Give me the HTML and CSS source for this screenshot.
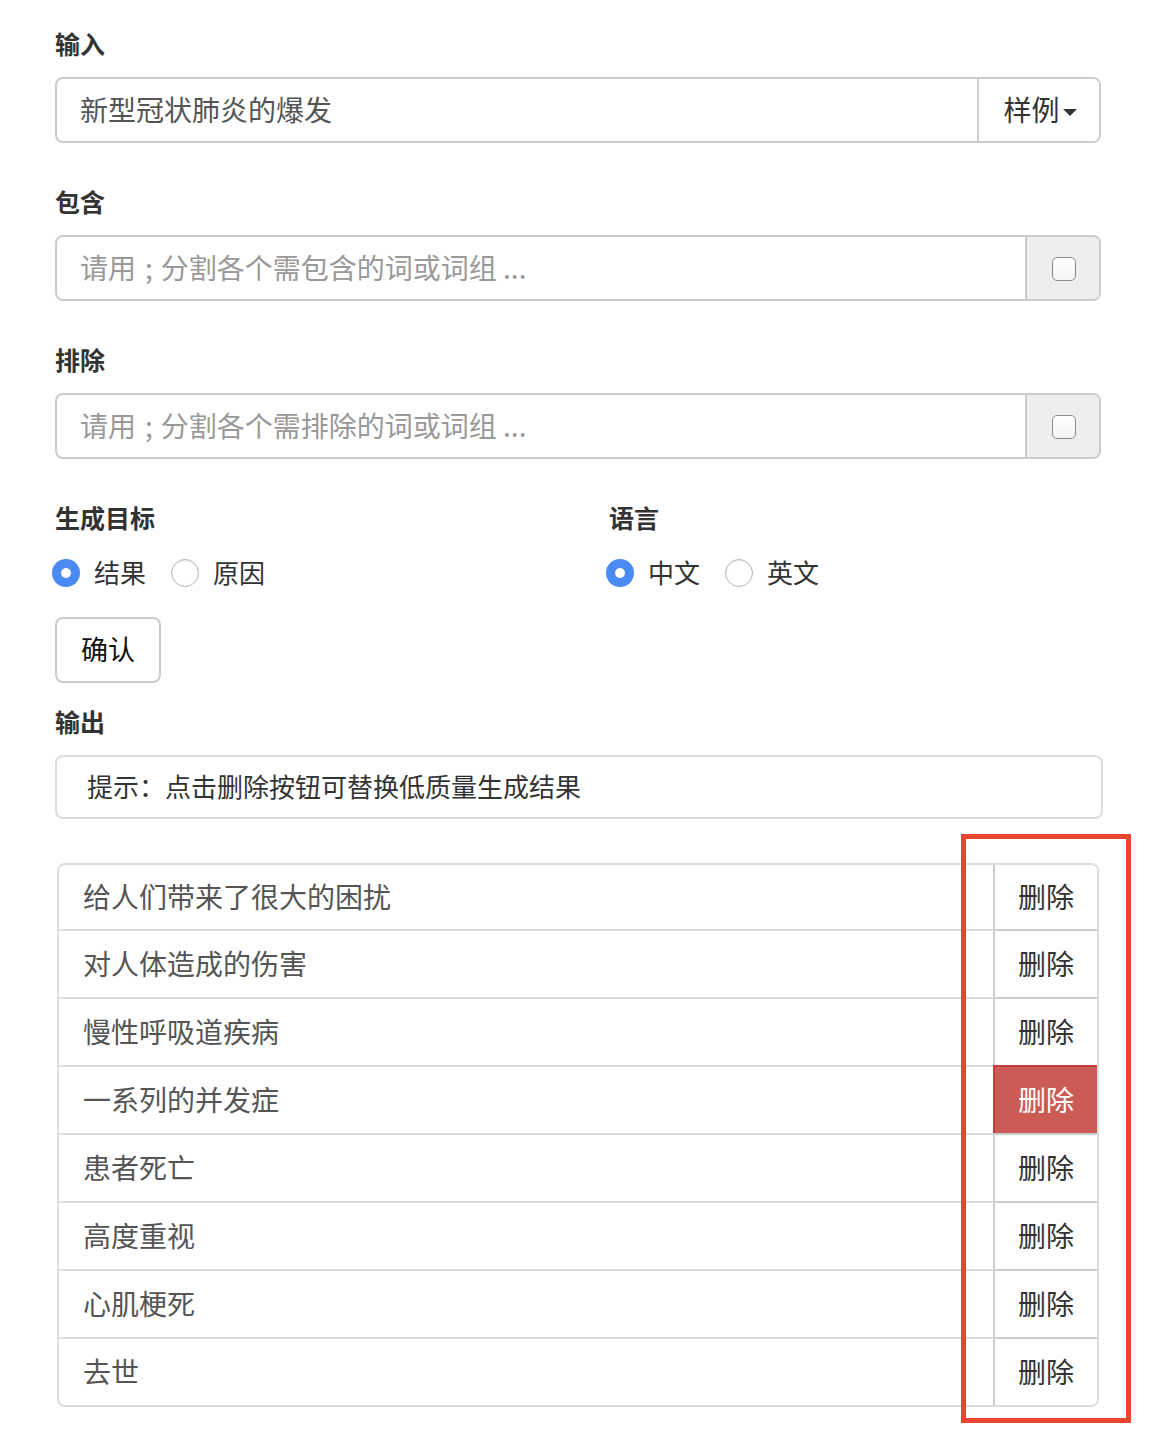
FILE: index.html
```html
<!DOCTYPE html>
<html lang="zh">
<head>
<meta charset="utf-8">
<title>生成</title>
<link rel="stylesheet" href="styles.css">
</head>
<body>
<div class="page">
  <div class="form-group">
    <div class="label">输入</div>
    <div class="input-group">
      <div class="field">新型冠状肺炎的爆发</div>
      <div class="addon addon-btn">样例<span class="caret"></span></div>
    </div>
  </div>

  <div class="form-group">
    <div class="label">包含</div>
    <div class="input-group">
      <div class="field placeholder">请用<span class="semi">;</span>分割各个需包含的词或词组 ...</div>
      <div class="addon addon-check"><span class="checkbox"></span></div>
    </div>
  </div>

  <div class="form-group">
    <div class="label">排除</div>
    <div class="input-group">
      <div class="field placeholder">请用<span class="semi">;</span>分割各个需排除的词或词组 ...</div>
      <div class="addon addon-check"><span class="checkbox"></span></div>
    </div>
  </div>

  <div class="cols">
    <div class="col">
      <div class="label">生成目标</div>
      <div class="radios">
        <span class="radio checked"></span><span class="radio-label">结果</span>
        <span class="radio"></span><span class="radio-label">原因</span>
      </div>
    </div>
    <div class="col">
      <div class="label">语言</div>
      <div class="radios">
        <span class="radio checked"></span><span class="radio-label">中文</span>
        <span class="radio"></span><span class="radio-label">英文</span>
      </div>
    </div>
  </div>

  <div class="btn-row"><div class="btn">确认</div></div>

  <div class="label">输出</div>
  <div class="hint">提示：点击删除按钮可替换低质量生成结果</div>

  <div class="list-wrap">
    <div class="list">
      <div class="row"><div class="item">给人们带来了很大的困扰</div><div class="del">删除</div></div>
      <div class="row"><div class="item">对人体造成的伤害</div><div class="del">删除</div></div>
      <div class="row"><div class="item">慢性呼吸道疾病</div><div class="del">删除</div></div>
      <div class="row"><div class="item">一系列的并发症</div><div class="del active">删除</div></div>
      <div class="row"><div class="item">患者死亡</div><div class="del">删除</div></div>
      <div class="row"><div class="item">高度重视</div><div class="del">删除</div></div>
      <div class="row"><div class="item">心肌梗死</div><div class="del">删除</div></div>
      <div class="row"><div class="item">去世</div><div class="del">删除</div></div>
    </div>
    <div class="annot"></div>
  </div>
</div>
</body>
</html>
```

FILE: styles.css
```css
* { box-sizing: border-box; }
html, body { margin: 0; padding: 0; background: #fff; }
body {
  font-family: "Noto Sans CJK SC", "Noto Sans", "Liberation Sans", sans-serif;
  color: #333;
}
.page {
  width: 1046px;
  margin-left: 55px;
  padding-top: 27px;
  padding-bottom: 24px;
}
.label {
  font-size: 25px;
  font-weight: bold;
  line-height: 32px;
  height: 36px;
  color: #333;
  margin-bottom: 14px;
}
.form-group { margin-bottom: 42px; }
.input-group {
  display: flex;
  height: 66px;
  border: 2px solid #ccc;
  border-radius: 8px;
  overflow: hidden;
}
.field {
  flex: 1;
  display: flex;
  align-items: center;
  padding: 0 23px 3px;
  font-size: 28px;
  color: #555;
}
.field.placeholder { color: #999; }
.semi { margin: 0 8px 0 9px; }
.addon {
  display: flex;
  align-items: center;
  justify-content: center;
  border-left: 2px solid #ccc;
}
.addon-btn {
  width: 122px;
  background: #fff;
  font-size: 28px;
  color: #333;
  padding-left: 2px;
  padding-bottom: 3px;
}
.caret {
  display: inline-block;
  width: 0; height: 0;
  margin-left: 3px;
  margin-top: 7px;
  border-left: 7px solid transparent;
  border-right: 7px solid transparent;
  border-top: 7px solid #333;
}
.addon-check {
  width: 74px;
  background: #eee;
}
.checkbox {
  display: block;
  width: 24px; height: 24px;
  margin-left: 2px;
  margin-top: 2px;
  border: 1.5px solid #8a8a8a;
  border-radius: 5px;
  background: linear-gradient(#fff, #f4f4f4);
}
.cols {
  display: grid;
  grid-template-columns: 554px 1fr;
}
.cols .label { margin-bottom: 16px; }
.radios {
  display: flex;
  align-items: center;
  height: 40px;
  margin-left: -3px;
}
.radio {
  width: 28px; height: 28px;
  border-radius: 50%;
  border: 1.5px solid #b5b5b5;
  background: #fff;
  box-shadow: inset 0 1px 2px rgba(0,0,0,0.08);
  margin-right: 14px;
  position: relative;
}
.radio.checked {
  border: none;
  background: #4a8af4;
  box-shadow: none;
}
.radio.checked::after {
  content: "";
  position: absolute;
  left: 9px; top: 9px;
  width: 10px; height: 10px;
  border-radius: 50%;
  background: #fff;
}
.radio-label {
  font-size: 26px;
  color: #333;
  margin-right: 25px;
  line-height: 40px;
  padding-bottom: 2px;
}
.btn-row { margin-top: 24px; margin-bottom: 22px; }
.btn {
  display: inline-flex;
  align-items: center;
  justify-content: center;
  width: 106px;
  height: 66px;
  border: 2px solid #ccc;
  border-radius: 8px;
  font-size: 27px;
  color: #111;
  background: #fff;
  padding-bottom: 3px;
}
.hint {
  height: 64px;
  width: 1048px;
  border: 2px solid #ddd;
  border-radius: 8px;
  display: flex;
  align-items: center;
  padding-left: 30px;
  padding-bottom: 3px;
  font-size: 26px;
  color: #333;
}
.list-wrap {
  position: relative;
  margin-top: 44px;
  margin-left: 2px;
  width: 1042px;
}
.list {
  border: 2px solid #ddd;
  border-radius: 8px;
  overflow: hidden;
}
.row {
  display: flex;
  height: 68px;
  border-top: 2px solid #ddd;
}
.row:first-child { border-top: none; height: 64px; }
.item {
  flex: 1;
  display: flex;
  align-items: center;
  padding-left: 24px;
  padding-bottom: 3px;
  font-size: 28px;
  color: #555;
}
.del {
  width: 104px;
  display: flex;
  align-items: center;
  justify-content: center;
  border-left: 2px solid #ccc;
  font-size: 28px;
  color: #333;
  background: #fff;
  margin-top: -2px;
  border-top: 2px solid #ccc;
  padding-bottom: 3px;
}
.row:first-child .del { margin-top: 0; border-top: none; }
.del.active {
  background: #cc5b55;
  color: #fff;
  border-left-color: #c2403b;
  border-top-color: #c2403b;
}
.annot {
  position: absolute;
  left: 904px;
  top: -29px;
  width: 170px;
  height: 589px;
  border: 5px solid #e9452f;
  pointer-events: none;
}
```
